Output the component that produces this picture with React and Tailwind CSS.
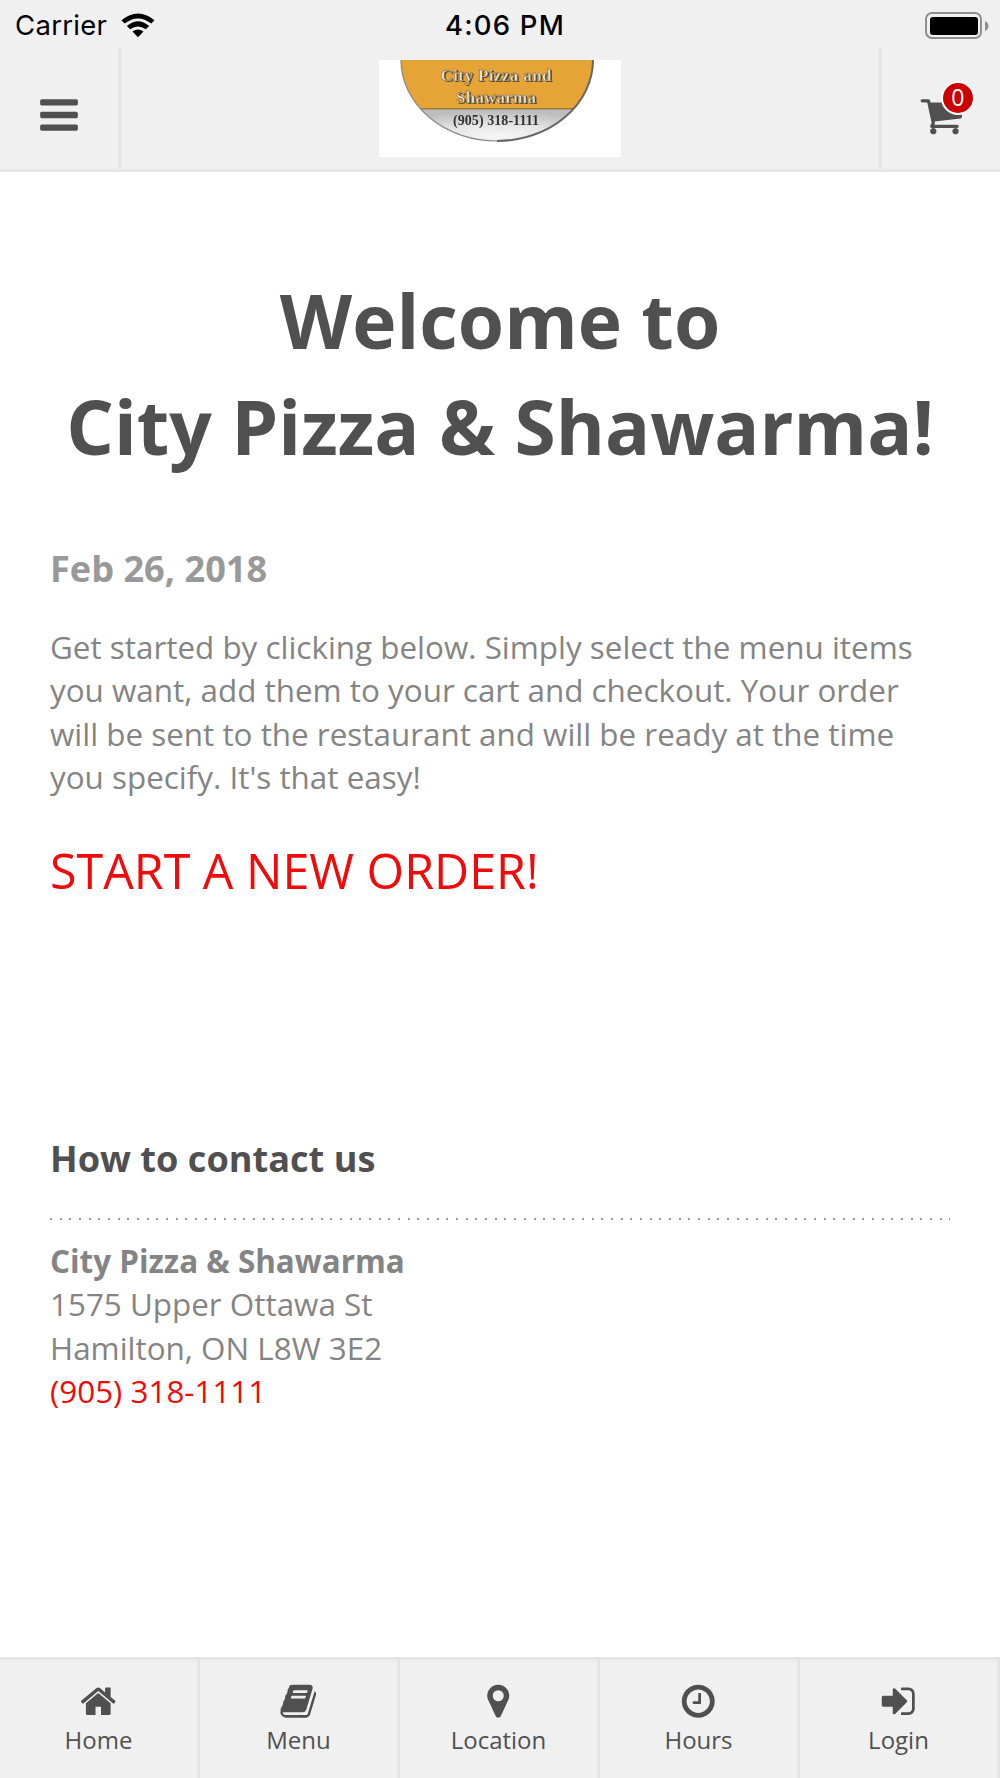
import React from 'react';

const icons = {
  home: 'M1472 992v480q0 26-19 45t-45 19h-384v-384h-256v384h-384q-26 0-45-19t-19-45v-480q0-1 .5-3t.5-3l575-474 575 474q1 2 1 6zm223-69l-62 74q-8 9-21 11h-3q-13 0-21-7l-692-577-692 577q-12 8-24 7-13-2-21-11l-62-74q-8-10-7-23.5t11-21.5l719-599q32-26 76-26t76 26l244 204v-195q0-14 9-23t23-9h192q14 0 23 9t9 23v408l219 182q10 8 11 21.5t-7 23.5z',
  book: 'M1703 478q40 57 18 129l-275 906q-19 64-76.5 107.5t-122.5 43.5h-923q-77 0-148.5-53.5t-99.5-131.5q-24-67-2-127 0-4 3-27t4-37q1-8-3-21.5t-3-19.5q2-11 8-21t16.5-23.5 16.5-23.5q23-38 45-91.5t30-91.5q3-10 .5-30t-.5-28q3-11 17-28t17-23q21-36 42-92t25-90q1-9-2.5-32t.5-28q4-13 22-30.5t22-22.5q19-26 42.5-84.5t27.5-96.5q1-8-3-25.5t-2-26.5q2-8 9-18t18-23 17-21q8-12 16.5-30.5t15-35 16-36 19.5-32 26.5-23.5 36-11.5 47.5 5.5l-1 3q38-9 51-9h761q74 0 114 56t18 130l-274 906q-36 119-71.5 153.5t-128.5 34.5h-869q-27 0-38 15-11 16-1 43 24 70 144 70h923q29 0 56-15.5t35-41.5l300-987q7-22 5-57 38 15 59 43zm-1064 2q-4 13 2 22.5t20 9.5h608q13 0 25.5-9.5t16.5-22.5l21-64q4-13-2-22.5t-20-9.5h-608q-13 0-25.5 9.5t-16.5 22.5zm-83 256q-4 13 2 22.5t20 9.5h608q13 0 25.5-9.5t16.5-22.5l21-64q4-13-2-22.5t-20-9.5h-608q-13 0-25.5 9.5t-16.5 22.5z',
  marker: 'M1152 640q0-106-75-181t-181-75-181 75-75 181 75 181 181 75 181-75 75-181zm256 0q0 109-33 179l-364 774q-16 33-47.5 52t-67.5 19-67.5-19-46.5-52l-365-774q-33-70-33-179 0-212 150-362t362-150 362 150 150 362z',
  clock: 'M1024 544v448q0 14-9 23t-23 9h-320q-14 0-23-9t-9-23v-64q0-14 9-23t23-9h224v-352q0-14 9-23t23-9h64q14 0 23 9t9 23zm416 352q0-148-73-273t-198-198-273-73-273 73-198 198-73 273 73 273 198 198 273 73 273-73 198-198 73-273zm224 0q0 209-103 385.5t-279.5 279.5-385.5 103-385.5-103-279.5-279.5-103-385.5 103-385.5 279.5-279.5 385.5-103 385.5 103 279.5 279.5 103 385.5z',
  signIn: 'M1312 896q0 26-19 45l-544 544q-19 19-45 19t-45-19-19-45v-288h-448q-26 0-45-19t-19-45v-384q0-26 19-45t45-19h448v-288q0-26 19-45t45-19 45 19l544 544q19 19 19 45zm352-352v704q0 119-84.5 203.5t-203.5 84.5h-320q-13 0-22.5-9.5t-9.5-22.5q0-4-1-20t-.5-26.5 3-23.5 10-19.5 20.5-6.5h320q66 0 113-47t47-113v-704q0-66-47-113t-113-47h-312l-11.5-1-11.5-3-8-5.5-7-9-2-13.5q0-4-1-20t-.5-26.5 3-23.5 10-19.5 20.5-6.5h320q119 0 203.5 84.5t84.5 203.5z',
  cart: 'M704 1536q0 52-38 90t-90 38-90-38-38-90 38-90 90-38 90 38 38 90zm896 0q0 52-38 90t-90 38-90-38-38-90 38-90 90-38 90 38 38 90zm128-1088v512q0 24-16.5 42.5t-40.5 21.5l-1044 122q13 60 13 70 0 16-24 64h920q26 0 45 19t19 45-19 45-45 19h-1024q-26 0-45-19t-19-45q0-11 8-31.5t16-36 21.5-40 15.5-29.5l-177-823h-204q-26 0-45-19t-19-45 19-45 45-19h256q16 0 28.5 6.5t19.5 15.5 13 24.5 8 26 5.5 29.5 4.5 26h1201q26 0 45 19t19 45z',
  bars: 'M1664 1344v128q0 26-19 45t-45 19h-1408q-26 0-45-19t-19-45v-128q0-26 19-45t45-19h1408q26 0 45 19t19 45zm0-512v128q0 26-19 45t-45 19h-1408q-26 0-45-19t-19-45v-128q0-26 19-45t45-19h1408q26 0 45 19t19 45zm0-512v128q0 26-19 45t-45 19h-1408q-26 0-45-19t-19-45v-128q0-26 19-45t45-19h1408q26 0 45 19t19 45z',
};

const tabs = [
  { label: 'Home', icon: 'home' },
  { label: 'Menu', icon: 'book' },
  { label: 'Location', icon: 'marker' },
  { label: 'Hours', icon: 'clock' },
  { label: 'Login', icon: 'signIn' },
];

const Icon = ({ name, className }) => (
  <svg viewBox="0 0 1792 1792" fill="currentColor" className={className}>
    <path d={icons[name]} />
  </svg>
);

const StatusBar = () => (
  <div className="grid h-12 grid-cols-3 items-center pt-[3px] pr-3 pl-[15px] font-[Inter,sans-serif] text-[27.5px] leading-none text-black">
    <div className="flex items-center gap-[13px]">
      <span className="w-[93px] tracking-[0.3px]">Carrier</span>
      <svg viewBox="0 0 34 25" className="h-[25px] w-[34px]">
        <path d="M0.5 7.2Q17-6.2 33.5 7.2L30.3 10.6Q17 0.2 3.7 10.6Z" />
        <path d="M5.8 13Q17 3.6 28.2 13L24.8 16.3Q17 10.6 9.2 16.3Z" />
        <path d="M11.5 18.6Q17 14.2 22.5 18.6L17 24.3Z" />
      </svg>
    </div>
    <span className="pl-[7px] text-center font-medium tracking-[1.2px]">4:06 PM</span>
    <svg viewBox="0 0 64 28" className="mr-[-1px] h-7 w-16 justify-self-end">
      <rect x="1" y="1" width="55" height="25" rx="6" fill="none" stroke="#8f8f8f" strokeWidth="2" />
      <rect x="5" y="5" width="48" height="18" rx="3" />
      <path d="M60 9q3.500 1.500 3.500 5t-3.500 5z" fill="#8f8f8f" />
    </svg>
  </div>
);

const Logo = () => (
  <svg viewBox="0 0 242 97" className="mt-3 h-[97px] w-[242px] bg-white">
    <defs>
      <clipPath id="plate">
        <path d="M22 0H214A96 81 0 0 1 118 81A96 81 0 0 1 22 0Z" />
      </clipPath>
      <radialGradient id="silver" cx="0.49" cy="0.55" r="0.5">
        <stop offset="0" stopColor="#f6f6f6" />
        <stop offset="0.45" stopColor="#e6e6e6" />
        <stop offset="1" stopColor="#bdbdbd" />
      </radialGradient>
      <filter id="soft">
        <feGaussianBlur stdDeviation="0.75" />
      </filter>
    </defs>
    <g filter="url(#soft)">
      <g clipPath="url(#plate)">
        <rect width="242" height="97" fill="#e5a435" />
        <rect y="49" width="242" height="48" fill="url(#silver)" />
        <rect y="48" width="242" height="1.500" fill="#9b7a3c" />
      </g>
      <path d="M22 0A96 81 0 0 0 118 81" fill="none" stroke="#888" strokeWidth="1.200" />
      <path d="M214 0A96 81 0 0 1 118 81" fill="none" stroke="#666" strokeWidth="2" />
      <g fontFamily="Liberation Serif, serif" fontWeight="bold" textAnchor="middle">
        <g fontSize="17" fill="#5b4a2a">
          <text x="118.500" y="22" textLength="111">City Pizza and</text>
          <text x="118.500" y="44" textLength="80">Shawarma</text>
        </g>
        <g fontSize="17" fill="#e4dfd2" stroke="#6b5a38" strokeWidth="0.4">
          <text x="117" y="20.500" textLength="111">City Pizza and</text>
          <text x="117" y="42.500" textLength="80">Shawarma</text>
        </g>
        <text x="117" y="65" fontSize="14" fill="#333" textLength="86">(905) 318-1111</text>
      </g>
    </g>
  </svg>
);

const Header = () => (
  <header className="h-[172px] border-b-3 border-[#e5e5e5] bg-[#f0f0f0]">
    <StatusBar />
    <div className="flex h-[121px] justify-between">
      <button className="flex w-[121px] items-center justify-center border-r-3 border-[#e5e5e5] pt-3">
        <Icon name="bars" className="size-[44px]" />
      </button>
      <Logo />
      <button className="flex w-[121px] items-center justify-center border-l-3 border-[#e5e5e5] pt-[13px]">
        <span className="relative">
          <Icon name="cart" className="size-[44.5px]" />
          <span className="absolute -top-[12px] left-[22px] flex size-[34px] items-center justify-center rounded-full border-2 border-white bg-[#cc0000] text-[23px] leading-none text-white">
            0
          </span>
        </span>
      </button>
    </div>
  </header>
);

const TabBar = () => (
  <nav className="grid h-[121px] grid-cols-5 border-t-3 border-[#e5e5e5] bg-[#f0f0f0]">
    {tabs.map((tab) => (
      <a key={tab.label} className="flex flex-col items-center border-r-3 border-[#e5e5e5] pt-[22px] text-2xl">
        <Icon name={tab.icon} className="size-[38.5px]" />
        <span className="mt-[3.5px] leading-8">{tab.label}</span>
      </a>
    ))}
  </nav>
);

const App = () => {
  return (
    <div className="flex h-[1778px] w-[1000px] flex-col overflow-hidden bg-white font-['Open_Sans',sans-serif] text-[#505050]">
      <Header />

      <main className="flex-1 px-[50px] text-[31.4px] leading-[43.5px] text-[#848484]">
        <h1 className="-mx-5 mt-[95px] text-center text-[74.9px] leading-[106px] font-bold whitespace-nowrap text-[#505050]">
          Welcome to
          <br />
          City Pizza &amp; Shawarma!
        </h1>

        <h3 className="mt-[64px] text-[36.15px] leading-[50px] font-bold text-[#999]">Feb 26, 2018</h3>
        <p className="mt-[31.5px] whitespace-nowrap">
          Get started by clicking below. Simply select the menu items
          <br />
          you want, add them to your cart and checkout. Your order
          <br />
          will be sent to the restaurant and will be ready at the time
          <br />
          you specify. It's that easy!
        </p>
        <a className="mt-[38.5px] block text-[48.4px] leading-[66px] text-[#ef0b0b]">START A NEW ORDER!</a>

        <section className="mt-[230px]">
          <h3 className="text-[36.15px] leading-[50px] font-bold text-[#505050]">How to contact us</h3>
          <div className="mt-[35px] h-[2px] bg-[repeating-linear-gradient(90deg,#999_0_2px,transparent_2px_9.67px)]" />
          <address className="mt-[18.5px] not-italic">
            <strong>City Pizza &amp; Shawarma</strong>
            <br />
            1575 Upper Ottawa St
            <br />
            Hamilton, ON L8W 3E2
            <br />
            <a className="text-[#ef0b0b]">(905) 318-1111</a>
          </address>
        </section>
      </main>

      <TabBar />
    </div>
  );
};

export default App;
